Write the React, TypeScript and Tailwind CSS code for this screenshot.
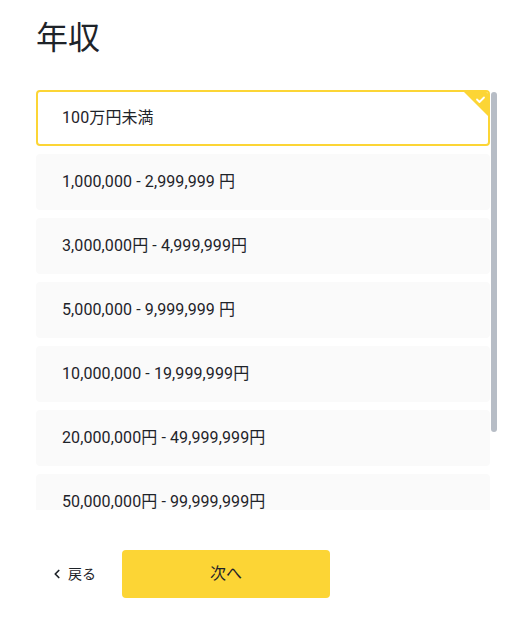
import { ChevronLeft } from "lucide-react";

const OPTIONS = [
  "100万円未満",
  "1,000,000 - 2,999,999 円",
  "3,000,000円 - 4,999,999円",
  "5,000,000 - 9,999,999 円",
  "10,000,000 - 19,999,999円",
  "20,000,000円 - 49,999,999円",
  "50,000,000円 - 99,999,999円",
  "100,000,000円以上",
];

const FONT = {
  fontFamily: '"Roboto", "Noto Sans CJK JP", sans-serif',
};

export default function App() {
  const selected = 0;

  return (
    <div
      className="w-[527px] h-[627px] bg-white text-[#1e2329] pl-9 pt-[14px]"
      style={FONT}
    >
      <h1 className="text-[32px] leading-[48px] font-normal">年収</h1>

      <div className="relative mt-7 w-[462px] h-[420px]">
        <div className="h-full overflow-hidden flex flex-col gap-2">
          {OPTIONS.map((label, i) => (
            <div
              key={label}
              className={`relative shrink-0 w-[454px] h-14 rounded flex items-center text-base tracking-[0.1px] overflow-hidden ${
                i === selected
                  ? "bg-white border-2 border-[#fcd535] px-6"
                  : "bg-[#fafafa] px-[26px]"
              }`}
            >
              <span>{label}</span>
              {i === selected && (
                <div className="absolute top-0 right-0 w-6 h-6">
                  <svg width="24" height="24" viewBox="0 0 24 24">
                    <polygon points="0,0 24,0 24,24" fill="#fcd535" />
                    <path
                      d="M13 7.5l2.5 2.5 4.5-4.5"
                      stroke="#fff"
                      strokeWidth="1.8"
                      fill="none"
                      strokeLinecap="round"
                      strokeLinejoin="round"
                    />
                  </svg>
                </div>
              )}
            </div>
          ))}
        </div>
        {/* scrollbar thumb */}
        <div className="absolute right-[1px] top-[2px] w-[6px] h-[340px] rounded-full bg-[#b7bdc6]" />
      </div>

      <div className="mt-10 flex items-center gap-[26px]">
        <button className="flex items-center gap-[4px] pl-[14px] text-sm text-[#1e2329]">
          <ChevronLeft className="w-[14px] h-[14px]" strokeWidth={3} />
          <span>戻る</span>
        </button>
        <button className="w-[208px] h-12 rounded bg-[#fcd535] text-base text-[#1e2329]">
          次へ
        </button>
      </div>
    </div>
  );
}
